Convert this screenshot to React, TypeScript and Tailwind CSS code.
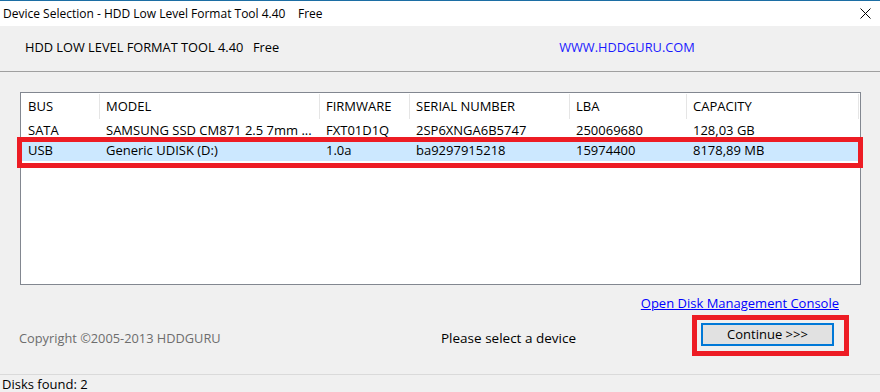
import React from "react";

const cols = [
  { name: "BUS", w: "w-[79px]", pl: "pl-[7px]" },
  { name: "MODEL", w: "w-[220px]", pl: "pl-[6px]" },
  { name: "FIRMWARE", w: "w-[90px]", pl: "pl-[6px]" },
  { name: "SERIAL NUMBER", w: "w-[160px]", pl: "pl-[6px]" },
  { name: "LBA", w: "w-[117px]", pl: "pl-[6px]" },
  { name: "CAPACITY", w: "w-[172px]", pl: "pl-[6px]" },
];

const rows = [
  ["SATA", "SAMSUNG SSD CM871 2.5 7mm ...", "FXT01D1Q", "2SP6XNGA6B5747", "250069680", "128,03 GB"],
  ["USB", "Generic UDISK (D:)", "1.0a", "ba9297915218", "15974400", "8178,89 MB"],
];

export default function App() {
  return (
    <div
      className="w-[880px] h-[392px] bg-[#f0f0f0] flex flex-col text-[12px] text-black overflow-hidden"
      style={{ fontFamily: '"Open Sans", "Noto Sans", sans-serif' }}
    >
      {/* Title bar */}
      <div className="h-[26px] bg-white border-t border-[#1c6ea4] flex items-center justify-between pl-[3px] pr-[9px]">
        <span className="leading-none">Device Selection - HDD Low Level Format Tool 4.40&nbsp;&nbsp;&nbsp;&nbsp;Free</span>
        <svg width="11" height="11" viewBox="0 0 11 11" className="-mt-[1px]">
          <path d="M0.5 0.5 L10.5 10.5 M10.5 0.5 L0.5 10.5" stroke="#000" strokeWidth="1" />
        </svg>
      </div>

      {/* Header */}
      <div className="h-[45px] flex items-center pb-[1px] text-[12.8px]">
        <span className="ml-[25px] w-[228px] whitespace-nowrap">HDD LOW LEVEL FORMAT TOOL 4.40</span>
        <span>Free</span>
        <span className="ml-[280px] text-[#1a1aff]">WWW.HDDGURU.COM</span>
      </div>
      <div className="h-px bg-[#a0a0a0]" />

      {/* Main */}
      <div className="relative flex-1 flex flex-col text-[13px]">
        <div className="mt-[20px] ml-[20px] w-[841px] h-[193px] border border-[#828790] bg-white">
          <div className="flex h-[27px]">
            {cols.map((c) => (
              <div key={c.name} className={`${c.w} ${c.pl} flex items-center relative`}>
                <span>{c.name}</span>
                <div className="absolute right-0 top-[1px] bottom-[1px] w-px bg-[#e5e5e5]" />
              </div>
            ))}
          </div>
          {rows.map((r, i) => (
            <div key={i} className={`flex items-center ${i === 1 ? "bg-[#cce8ff] h-[20px]" : "h-[21px]"}`}>
              {r.map((v, j) => (
                <div key={j} className={`${cols[j].w} ${cols[j].pl} whitespace-nowrap overflow-hidden`}>
                  {v}
                </div>
              ))}
            </div>
          ))}
        </div>

        {/* red highlight around selected row */}
        <div className="absolute left-[17px] top-[65px] w-[846px] h-[31px] border-[5px] border-[#ed1c24]" />

        <div className="flex justify-end pr-[41px] mt-[12px]">
          <span className="text-[#0000ff] underline text-[13px] leading-none">Open Disk Management Console</span>
        </div>

        <div className="flex items-start mt-[13px] h-[24px]">
          <span className="ml-[19px] w-[422px] text-[#6d6d6d] text-[12.8px] leading-[18px] mt-[6px]">Copyright ©2005-2013 HDDGURU</span>
          <span className="w-[260px] text-[13.5px] leading-[18px] mt-[6px]">Please select a device</span>
          <div className="relative">
            <button className="w-[133px] h-[23px] border-2 border-[#0078d7] bg-[#e1e1e1] text-[13px] leading-none flex items-center justify-center">
              Continue &gt;&gt;&gt;
            </button>
            <div className="absolute -left-[9px] -top-[8px] w-[157px] h-[41px] border-[5px] border-[#ed1c24]" />
          </div>
        </div>
      </div>

      {/* Status bar */}
      <div className="h-px bg-[#dadada]" />
      <div className="h-[17px] flex items-center pl-[2px] pt-[2px] text-[13px]">Disks found: 2</div>
    </div>
  );
}
